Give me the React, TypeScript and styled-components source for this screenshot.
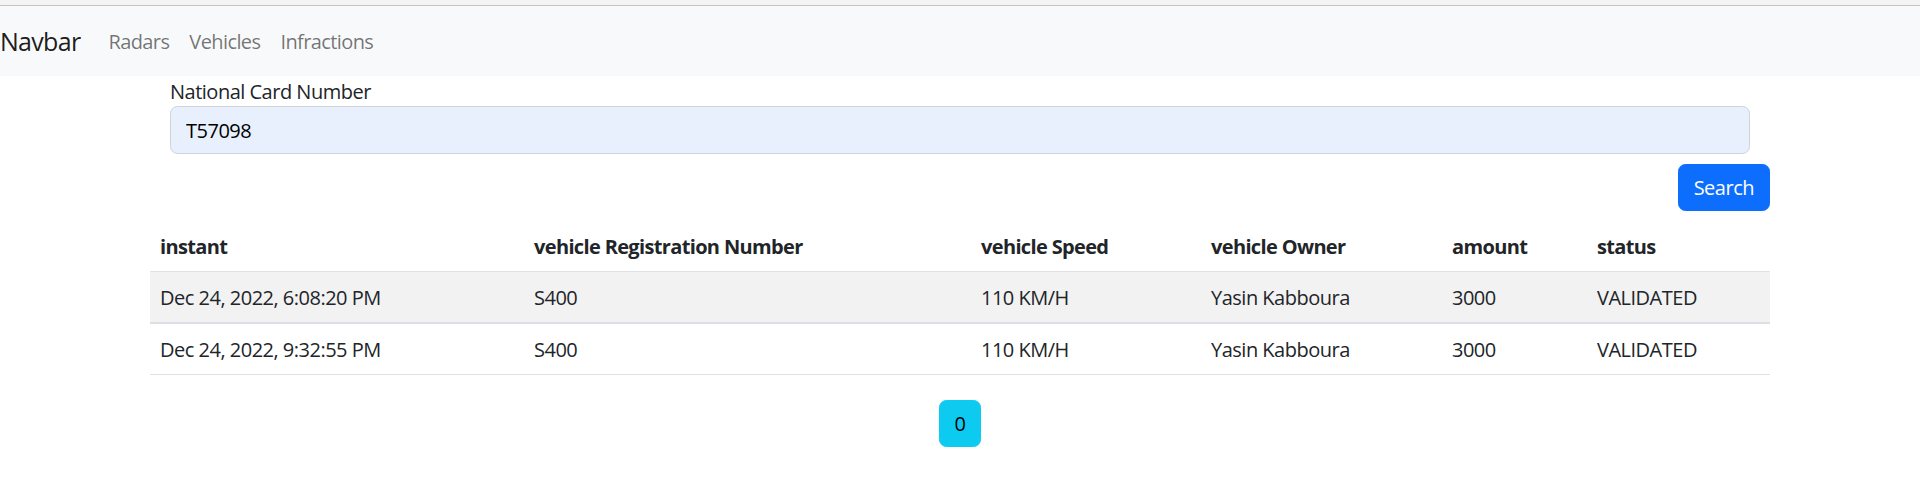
import React from "react";
import styled, { createGlobalStyle } from "styled-components";

const GlobalStyle = createGlobalStyle`
  html, body {
    margin: 0;
    padding: 0;
    background: #ffffff;
  }
  body {
    font-family: "Open Sans", "Liberation Sans", sans-serif;
    font-size: 20px;
    line-height: 30px;
    letter-spacing: -0.5px;
    color: #212529;
  }
  * { box-sizing: border-box; }
`;

const TopStrip = styled.div`
  height: 6px;
  background: #f4f4f4;
  border-bottom: 1px solid #c4c4c4;
`;

const Navbar = styled.nav`
  height: 70px;
  padding-top: 2px;
  background: #f8f9fa;
  display: flex;
  align-items: center;
`;

const Brand = styled.a`
  font-size: 25px;
  line-height: 37.5px;
  letter-spacing: -0.7px;
  color: rgba(0, 0, 0, 0.9);
  margin-right: 18px;
  text-decoration: none;
`;

const NavList = styled.ul`
  display: flex;
  list-style: none;
  margin: 0;
  padding: 0;
`;

const NavLink = styled.a`
  display: block;
  padding: 0 10px;
  letter-spacing: -0.6px;
  color: rgba(0, 0, 0, 0.55);
  text-decoration: none;
`;

const Container = styled.main`
  width: 1620px;
  margin: 0 auto;
`;

const FormBlock = styled.div`
  padding: 0 20px;
`;

const Label = styled.label`
  display: block;
  height: 30px;
  padding-top: 1px;
  line-height: 30px;
`;

const Input = styled.input`
  display: block;
  width: 100%;
  height: 47.5px;
  padding: 8px 15px 7px;
  font: inherit;
  letter-spacing: inherit;
  color: #000;
  background: #e8f0fe;
  border: 1.25px solid #ced4da;
  border-radius: 7.5px;
  outline: none;
`;

const Actions = styled.div`
  display: flex;
  justify-content: flex-end;
  margin-top: 10.5px;
`;

const Button = styled.button<{ $variant: "primary" | "info" }>`
  font: inherit;
  letter-spacing: inherit;
  line-height: 30px;
  padding: 8px 15px 7px;
  border-radius: 7.5px;
  cursor: pointer;
  border: 1.25px solid ${(p) => (p.$variant === "primary" ? "#0d6efd" : "#0dcaf0")};
  background: ${(p) => (p.$variant === "primary" ? "#0d6efd" : "#0dcaf0")};
  color: ${(p) => (p.$variant === "primary" ? "#ffffff" : "#000000")};
`;

const Table = styled.table`
  width: 100%;
  margin-top: 9.5px;
  border-collapse: collapse;
  table-layout: fixed;
`;

const HeadCell = styled.th`
  text-align: left;
  font-weight: 700;
  letter-spacing: -0.65px;
  padding: 11px 10px 9px;
  line-height: 30px;
  border-bottom: 1px solid #dee2e6;
`;

const Row = styled.tr<{ $striped: boolean; $thick: boolean }>`
  background: ${(p) => (p.$striped ? "#f2f2f2" : "#ffffff")};
  border-bottom: ${(p) => (p.$thick ? "2px solid #dcdfe3" : "1px solid #dee2e6")};
`;

const Cell = styled.td`
  padding: 11px 10px 9px;
  line-height: 30px;
  white-space: nowrap;
`;

const Pager = styled.div`
  display: flex;
  justify-content: center;
  margin-top: 25.5px;
`;

const columns = [
  { key: "instant", label: "instant", width: 374 },
  { key: "reg", label: "vehicle Registration Number", width: 447 },
  { key: "speed", label: "vehicle Speed", width: 230 },
  { key: "owner", label: "vehicle Owner", width: 241 },
  { key: "amount", label: "amount", width: 145 },
  { key: "status", label: "status", width: 183 },
];

const rows = [
  {
    instant: "Dec 24, 2022, 6:08:20 PM",
    reg: "S400",
    speed: "110 KM/H",
    owner: "Yasin Kabboura",
    amount: "3000",
    status: "VALIDATED",
  },
  {
    instant: "Dec 24, 2022, 9:32:55 PM",
    reg: "S400",
    speed: "110 KM/H",
    owner: "Yasin Kabboura",
    amount: "3000",
    status: "VALIDATED",
  },
];

export default function App() {
  return (
    <>
      <GlobalStyle />
      <TopStrip />
      <Navbar>
        <Brand href="#">Navbar</Brand>
        <NavList>
          <li><NavLink href="#">Radars</NavLink></li>
          <li><NavLink href="#">Vehicles</NavLink></li>
          <li><NavLink href="#">Infractions</NavLink></li>
        </NavList>
      </Navbar>
      <Container>
        <FormBlock>
          <Label htmlFor="cin">National Card Number</Label>
          <Input id="cin" defaultValue="T57098" />
        </FormBlock>
        <Actions>
          <Button $variant="primary">Search</Button>
        </Actions>
        <Table>
          <colgroup>
            {columns.map((c) => (
              <col key={c.key} style={{ width: c.width }} />
            ))}
          </colgroup>
          <thead>
            <tr>
              {columns.map((c) => (
                <HeadCell key={c.key}>{c.label}</HeadCell>
              ))}
            </tr>
          </thead>
          <tbody>
            {rows.map((r, i) => (
              <Row key={i} $striped={i === 0} $thick={i === 0}>
                {columns.map((c) => (
                  <Cell key={c.key}>{(r as Record<string, string>)[c.key]}</Cell>
                ))}
              </Row>
            ))}
          </tbody>
        </Table>
        <Pager>
          <Button $variant="info">0</Button>
        </Pager>
      </Container>
    </>
  );
}
